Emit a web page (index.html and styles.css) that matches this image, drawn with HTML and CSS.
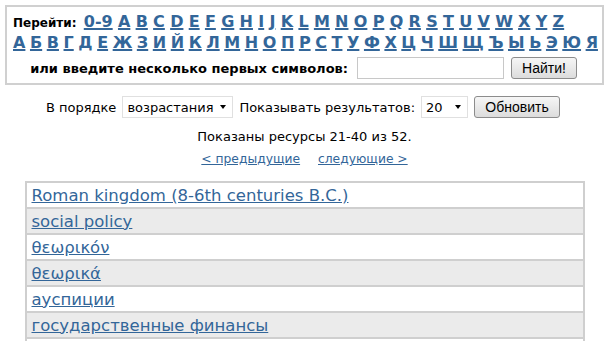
FILE: index.html
```html
<!DOCTYPE html>
<html lang="ru">
<head>
  <meta charset="UTF-8">
  <title>Ресурсы</title>
  <link rel="stylesheet" href="styles.css">
</head>
<body>

  <div class="poisk">
    <div class="bukvy">
      <b class="perejti">Перейти:</b>
      <a href="#">0-9</a> <a href="#">A</a> <a href="#">B</a> <a href="#">C</a> <a href="#">D</a> <a href="#">E</a> <a href="#">F</a> <a href="#">G</a> <a href="#">H</a> <a href="#">I</a> <a href="#">J</a> <a href="#">K</a> <a href="#">L</a> <a href="#">M</a> <a href="#">N</a> <a href="#">O</a> <a href="#">P</a> <a href="#">Q</a> <a href="#">R</a> <a href="#">S</a> <a href="#">T</a> <a href="#">U</a> <a href="#">V</a> <a href="#">W</a> <a href="#">X</a> <a href="#">Y</a> <a href="#">Z</a>
    </div>
    <div class="bukvy kirillica">
      <a href="#">А</a> <a href="#">Б</a> <a href="#">В</a> <a href="#">Г</a> <a href="#">Д</a> <a href="#">Е</a> <a href="#">Ж</a> <a href="#">З</a> <a href="#">И</a> <a href="#">Й</a> <a href="#">К</a> <a href="#">Л</a> <a href="#">М</a> <a href="#">Н</a> <a href="#">О</a> <a href="#">П</a> <a href="#">Р</a> <a href="#">С</a> <a href="#">Т</a> <a href="#">У</a> <a href="#">Ф</a> <a href="#">Х</a> <a href="#">Ц</a> <a href="#">Ч</a> <a href="#">Ш</a> <a href="#">Щ</a> <a href="#">Ъ</a> <a href="#">Ы</a> <a href="#">Ь</a> <a href="#">Э</a> <a href="#">Ю</a> <a href="#">Я</a>
    </div>
    <div class="vvod">
      <label for="nachalo">или введите несколько первых символов:</label>
      <input type="text" id="nachalo">
      <button class="knopka najti">Найти!</button>
    </div>
  </div>

  <div class="nastrojki">
    <span>В порядке</span>
    <span class="vybor shirokij">
      <select>
        <option>возрастания</option>
        <option>убывания</option>
      </select>
    </span>
    <span>Показывать результатов:</span>
    <span class="vybor">
      <select>
        <option>20</option>
        <option>40</option>
      </select>
    </span>
    <button class="knopka obnovit">Обновить</button>
  </div>

  <p class="itog">Показаны ресурсы 21-40 из 52.</p>
  <p class="stranicy">
    <a href="#">&lt; предыдущие</a>
    <a href="#">следующие &gt;</a>
  </p>

  <table class="spisok">
    <tr><td><a href="#">Roman kingdom (8-6th centuries B.C.)</a></td></tr>
    <tr class="seryj"><td><a href="#">social policy</a></td></tr>
    <tr><td><a href="#">θεωρικόν</a></td></tr>
    <tr class="seryj"><td><a href="#">θεωρικά</a></td></tr>
    <tr><td><a href="#">ауспиции</a></td></tr>
    <tr class="seryj"><td><a href="#">государственные финансы</a></td></tr>
    <tr><td><a href="#">римское право</a></td></tr>
  </table>

</body>
</html>
```

FILE: styles.css
```css
body {
  margin: 5px;
  font-family: 'DejaVu Sans', Verdana, sans-serif;
  font-size: 13px;
  color: #000;
  background: #fff;
}

a {
  color: #336699;
}

.poisk {
  border: 2px solid #d0d0d0;
  padding: 5px 6px 4px 6px;
}

.bukvy {
  font-size: 16px;
  font-weight: bold;
  line-height: 20px;
  white-space: nowrap;
  word-spacing: -0.3px;
}

.bukvy.kirillica {
  word-spacing: -1px;
}

.bukvy a {
  text-decoration-thickness: 2px;
}

.perejti {
  font-size: 12px;
  word-spacing: normal;
  margin-right: 2px;
}

.vvod {
  display: flex;
  align-items: center;
  justify-content: flex-end;
  gap: 7px;
  margin-top: 4px;
  padding-right: 19px;
}

.vvod label {
  font-weight: bold;
  margin-right: 2px;
}

.vvod input {
  width: 143px;
  height: 18px;
  border: 1px solid #c8c8c8;
  padding: 1px 1px;
}

.knopka {
  font-family: 'Liberation Sans', Arial, sans-serif;
  font-size: 14px;
  height: 22px;
  padding: 0;
  border: 1px solid #8c8c8c;
  border-radius: 3px;
  background: linear-gradient(#f6f6f6, #dcdcdc);
  color: #000;
}

.najti {
  width: 66px;
}

.nastrojki {
  display: flex;
  justify-content: center;
  align-items: center;
  gap: 6px;
  margin-top: 11px;
  padding-right: 3px;
}

.vybor {
  position: relative;
  display: inline-block;
}

.vybor select {
  appearance: none;
  font-family: 'DejaVu Sans', Verdana, sans-serif;
  font-size: 13px;
  height: 22px;
  width: 47px;
  padding: 0 4px;
  border: 1px solid #e0e0e0;
  background: #fff;
  color: #000;
}

.vybor.shirokij select {
  width: 111px;
}

.vybor::after {
  content: "";
  position: absolute;
  right: 7px;
  top: 9px;
  border-left: 3px solid transparent;
  border-right: 3px solid transparent;
  border-top: 4px solid #000;
  pointer-events: none;
}

.obnovit {
  width: 86px;
}

.itog {
  text-align: center;
  margin: 10px 0 0 0;
  line-height: 18px;
}

.stranicy {
  text-align: center;
  margin: 4px 0 0 0;
  line-height: 18px;
  font-size: 12.3px;
  word-spacing: 8px;
}

.stranicy a {
  word-spacing: normal;
  margin: 0 3px;
}

.spisok {
  width: 560px;
  margin: 13px auto 0 auto;
  border-collapse: collapse;
  border: 2px solid #cfcfcf;
}

.spisok td {
  border-top: 2px solid #cfcfcf;
  height: 24px;
  padding: 0 5px;
  font-size: 16.5px;
}

.spisok tr.seryj td {
  background: #ebebeb;
}
```
